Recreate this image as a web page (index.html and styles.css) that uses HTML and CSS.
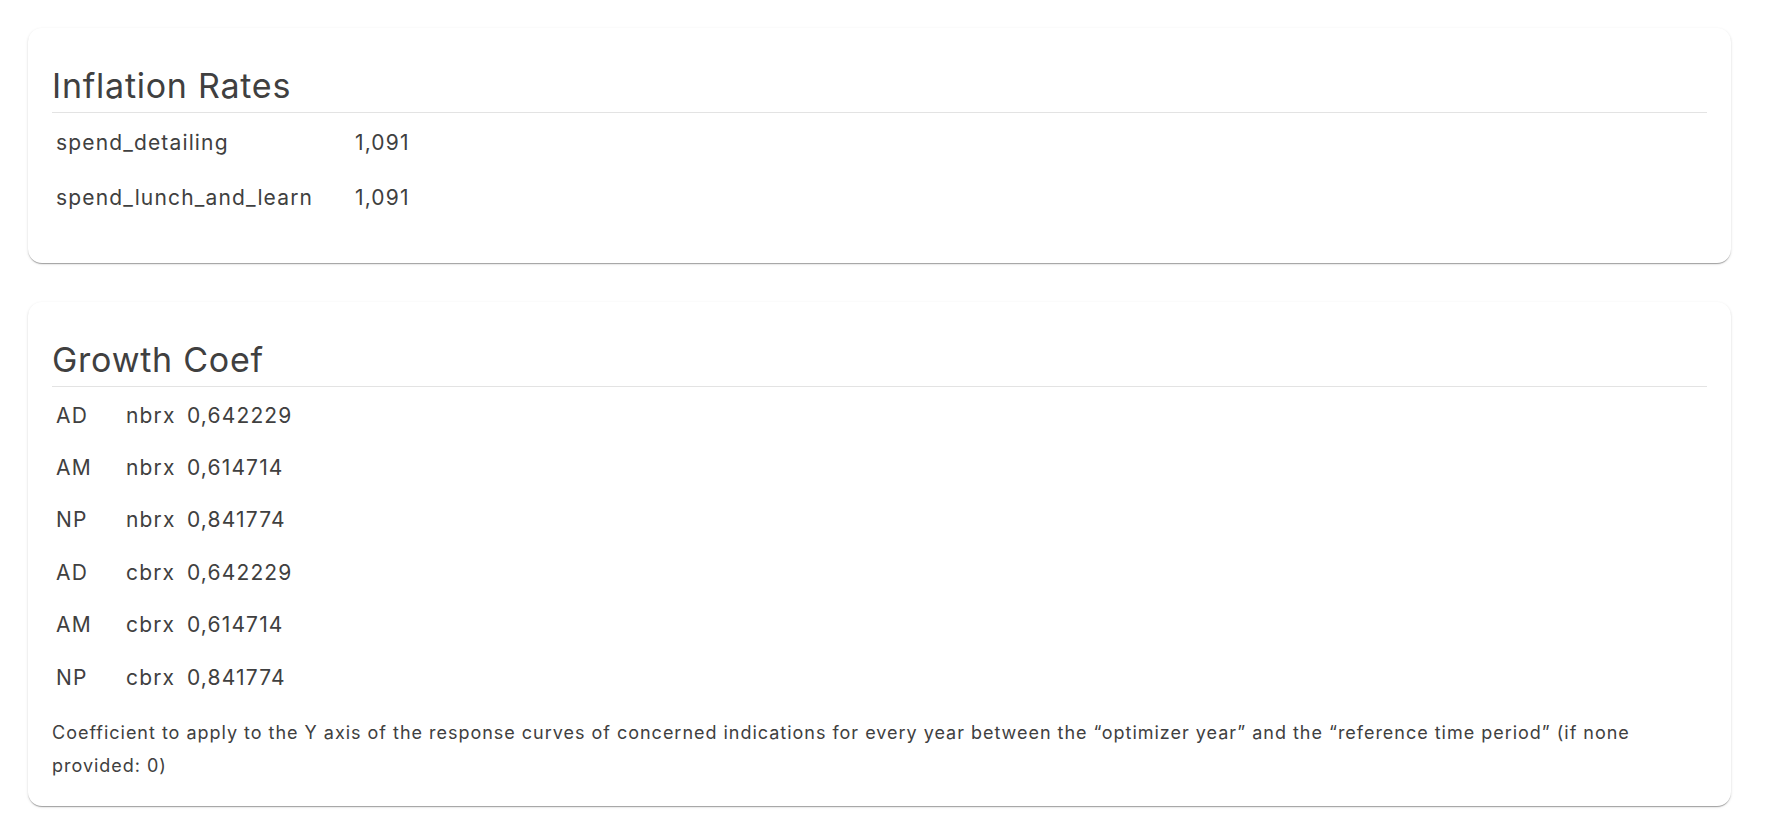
FILE: index.html
```html
<!DOCTYPE html>
<html>
<head>
<meta charset="utf-8">
<link rel="stylesheet" href="styles.css">
</head>
<body>
<main class="page">
  <section class="card">
    <h2 class="card-title">Inflation Rates</h2>
    <table class="kv kv-inflation">
      <tr><td class="c-name">spend_detailing</td><td>1,091</td></tr>
      <tr><td class="c-name">spend_lunch_and_learn</td><td>1,091</td></tr>
    </table>
  </section>
  <section class="card">
    <h2 class="card-title">Growth Coef</h2>
    <table class="kv kv-growth">
      <tr><td class="c-ind">AD</td><td class="c-type">nbrx</td><td>0,642229</td></tr>
      <tr><td class="c-ind">AM</td><td class="c-type">nbrx</td><td>0,614714</td></tr>
      <tr><td class="c-ind">NP</td><td class="c-type">nbrx</td><td>0,841774</td></tr>
      <tr><td class="c-ind">AD</td><td class="c-type">cbrx</td><td>0,642229</td></tr>
      <tr><td class="c-ind">AM</td><td class="c-type">cbrx</td><td>0,614714</td></tr>
      <tr><td class="c-ind">NP</td><td class="c-type">cbrx</td><td>0,841774</td></tr>
    </table>
    <p class="note">Coefficient to apply to the Y axis of the response curves of concerned indications for every year between the “optimizer year” and the “reference time period” (if none provided: 0)</p>
  </section>
</main>
</body>
</html>
```

FILE: styles.css
```css
* { box-sizing: border-box; }
html, body { margin: 0; padding: 0; background: #ffffff; }
body {
  font-family: Inter, "Noto Sans", sans-serif;
  color: #404040;
}
.page {
  display: flex;
  flex-direction: column;
  gap: 39px;
  padding: 28px 37px 25px 28px;
}
.card {
  background: #fff;
  border-radius: 14px;
  padding: 24px;
  box-shadow: 0 2px 1px -1px rgba(0,0,0,0.2), 0 1px 1px 0 rgba(0,0,0,0.14), 0 1px 3px 0 rgba(0,0,0,0.12);
}
.card-title {
  margin: 0;
  padding: 15px 0 7px;
  font-size: 34px;
  line-height: 38px;
  font-weight: 400;
  letter-spacing: 0.75px;
  color: #404040;
  border-bottom: 1px solid #e3e3e3;
}
.kv {
  border-collapse: collapse;
  margin-top: 2px;
  font-size: 21px;
  letter-spacing: 1.15px;
  color: #404040;
}
.kv td {
  padding: 0 4px;
  white-space: nowrap;
}
.kv-inflation { margin-bottom: 14px; }
.kv-inflation tr { height: 55px; }
.kv-inflation .c-name { width: 299px; }
.kv-growth tr { height: 52.4px; }
.kv-growth .c-ind { width: 70px; }
.kv-growth .c-type { width: 61px; }
.note {
  margin: 13px 0 0;
  font-size: 18px;
  line-height: 33px;
  letter-spacing: 0.98px;
  color: #404040;
}
```
